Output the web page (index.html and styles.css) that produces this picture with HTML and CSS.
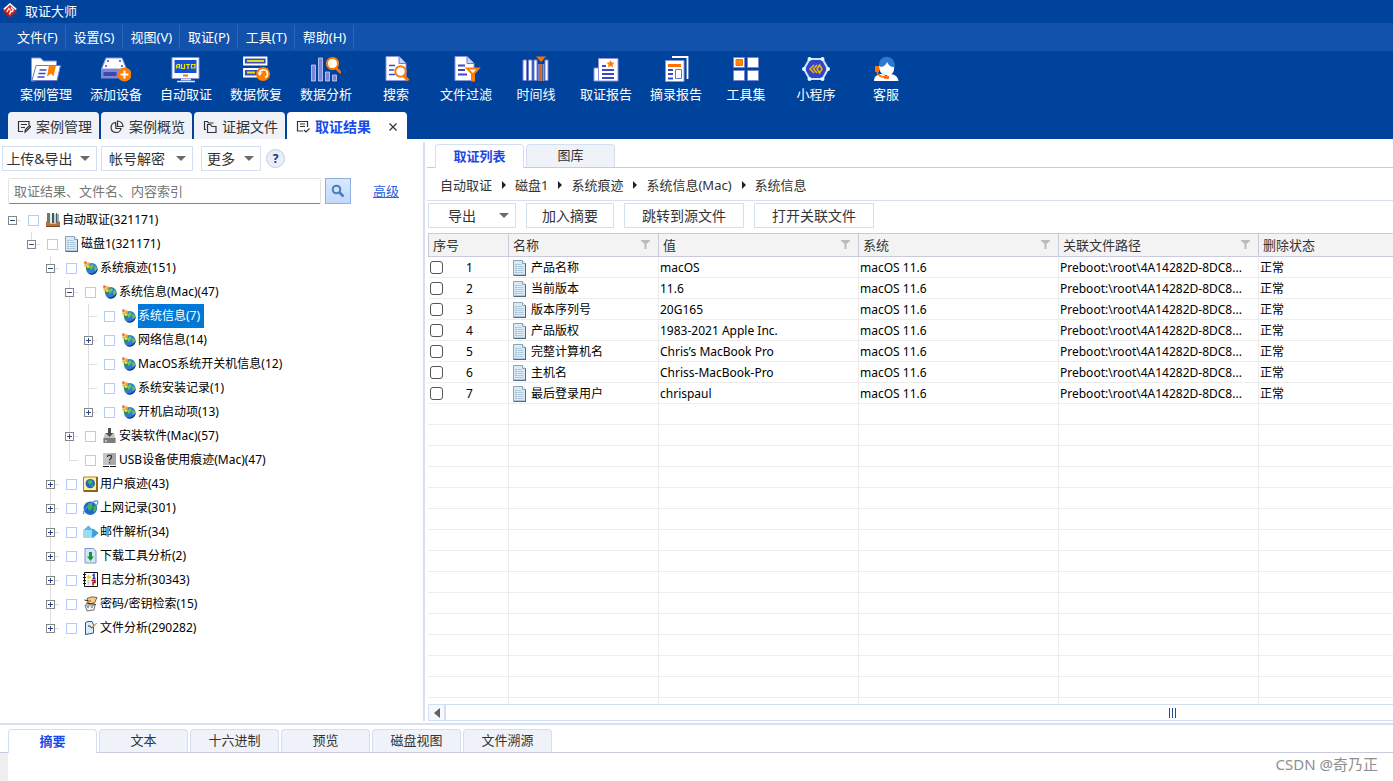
FILE: index.html
```html
<!DOCTYPE html>
<html lang="zh-CN">
<head>
<meta charset="utf-8">
<title>取证大师</title>
<link rel="stylesheet" href="styles.css">
</head>
<body>
<svg class="sprite" aria-hidden="true">
  <symbol id="globe" viewBox="0 0 16 16">
    <circle cx="8.800" cy="8.800" r="5.800" fill="#2f7ad8"/>
    <path d="M14.600 8.500A5.900 5.900 0 0 1 5 13.300c4 1 8-1 9.600-4.800z" fill="#15397c"/>
    <path d="M7 5.500 9 4.200l1.600.6-.2 2.400-1.600 1-.4 1.800-1.400-1zM11.500 6l1.800.6.5 2.200-1.300 2.400-1.300-1.400z" fill="#6cc94a"/>
    <path d="M2.500 7.500 4 10l2 .5 1-2-2-2z" fill="#2f8f3a"/>
    <path d="M1.200 1.500h2.600v2.300H1.200z" fill="#e8661c"/>
    <path d="M4.200 2.500h2.600v2.600H4.200z" fill="#f0a030"/>
    <path d="M1.500 4.300h2.300v2.300H1.500z" fill="#c8b830"/>
    <path d="M4 5.300h2.500v2.500H4z" fill="#f8e040"/>
  </symbol>
  <symbol id="doc" viewBox="0 0 16 16">
    <path d="M.5.500h9l3 3v11.500H.5z" fill="#d9eaf6" stroke="#8ba6bd"/>
    <path d="M9.500.500v3h3" fill="#f4fafe" stroke="#8ba6bd"/>
    <path d="M12.500 3.500v12M.500 15.500h12.500" fill="none" stroke="#4f6a80"/>
    <path d="M2.500 4.500h1M2.500 8.500h1" stroke="#5cb070"/>
    <path d="M2.500 6.500h1M2.500 10.500h1M2.500 12.500h1" stroke="#5a8cd0"/>
    <path d="M4.500 4.500h4M4.500 6.500h6M4.500 8.500h6M4.500 10.500h6M4.500 12.500h6" stroke="#b3cade"/>
  </symbol>
  <symbol id="funnel" viewBox="0 0 9 10"><path d="M0 0h9v1L5.500 4v5h-2V4L0 1z" fill="#bcbcbc"/></symbol>
</svg>

<header class="top">
  <div class="titlebar">
    <svg class="logo" viewBox="0 0 14 16"><path d="M.5 6.500 7 15.500 13.500 6.500V9L7 15.800.5 9z" fill="#b81c16"/><path d="M.5 6.500 7 1l6.500 5.500L7 14z" fill="#d8261e"/><path d="M.8 6.300 7 1l6.200 5.300" fill="none" stroke="#fff" stroke-width="1.600"/><path d="M3.800 9l2-3.500 1.400 1.500M6.500 11.500l1.300-3.500 1.400 1M8 4.500l2.300 2.300-1 2" fill="none" stroke="#fff" stroke-width="1.200"/></svg>
    <span>取证大师</span>
  </div>
  <nav class="menubar">
    <button>文件(F)</button><button>设置(S)</button><button>视图(V)</button><button>取证(P)</button><button>工具(T)</button><button>帮助(H)</button>
  </nav>
  <div class="toolbar">
    <button><svg viewBox="0 0 30 28"><path d="M.5 2h9l3 3h13v6H22L4 25H.5z" fill="#fff" stroke="#8a94dc"/><path d="M5 9.500h24.500L26 24.500H1z" fill="#fff" stroke="#6f78cc"/><path d="M8.500 14h7M7.500 17.500h7M6.500 21h7" stroke="#3b48c8" stroke-width="1.500"/><path d="M18 9.500h7l-2.500 11-2.500-3-4 3z" fill="#ff7d00"/></svg><span>案例管理</span></button>
    <button><svg viewBox="0 0 30 28"><path d="M5 2h16l4.500 11H.500z" fill="#fff" stroke="#8a94dc"/><path d="M0 13h26v9.500H0z" fill="#8088d0"/><path d="M2.500 16h13v4h-13z" fill="#3c47b8"/><path d="M6 5h2M18 5h2M4 10h2M20 10h2" stroke="#3b48c8" stroke-width="1.500"/><circle cx="23.500" cy="18.500" r="7" fill="#ff7d00"/><path d="M19.500 18.500h8M23.500 14.500v8" stroke="#fff" stroke-width="2"/></svg><span>添加设备</span></button>
    <button><svg viewBox="0 0 30 28"><path d="M1 1.500h27v21H1z" fill="#fff" stroke="#8a94dc"/><path d="M3.500 4h22v13h-22z" fill="#1750d8"/><path d="M5.500 12.500v-3l1-1h2v4M5.500 11h3M10.500 8v4.500h3V8M15 8.500h4M17 8.500v4.500M20.500 8.500h3.500v3.500h-3.500z" fill="none" stroke="#e8e800" stroke-width="1.200"/><path d="M12 19.500h5" stroke="#ff7000" stroke-width="2"/><path d="M10 23.500h10M6 25.500h18" stroke="#dfe4ff" stroke-width="1.300"/></svg><span>自动取证</span></button>
    <button><svg viewBox="0 0 30 28"><path d="M3 1.500h22.500v7H3zM3 13h22.500v7.500H3z" fill="#3c47c8" stroke="#fff" stroke-width="1.800"/><path d="M6 5h17M6 16.500h8" stroke="#e9e000" stroke-width="2"/><circle cx="22" cy="18" r="7" fill="#ff7d00"/><path d="M24 21.500a4 4 0 1 0-5.500-3.500" fill="none" stroke="#fff" stroke-width="1.600"/><path d="M16.500 16.500h5l-3 3.500z" fill="#fff"/></svg><span>数据恢复</span></button>
    <button><svg viewBox="0 0 30 28"><g fill="#7c86d8" stroke="#c9d0fa" stroke-width=".8"><path d="M.5 9h4v16h-4zM7.500 2h4v23h-4zM14.500 16h4v9h-4zM21.500 19h4v6h-4z"/></g><path d="m25 12 5 5" stroke="#ff7000" stroke-width="2.600"/><circle cx="21.500" cy="7.500" r="5.600" fill="#fff" stroke="#ff7d00" stroke-width="2"/></svg><span>数据分析</span></button>
    <button><svg viewBox="0 0 30 28"><path d="M5 .5h13l7 7v17H5z" fill="#fff" stroke="#8a94dc"/><path d="M18 .5v7h7" fill="#c9d2fa" stroke="#6f78cc"/><path d="M8 9.500h6M8 14h5M8 18.500h6" stroke="#3b48c8" stroke-width="1.500"/><path d="m22 19 5.500 5.500" stroke="#ff7000" stroke-width="3"/><circle cx="19.500" cy="15.500" r="5.200" fill="#fff" stroke="#ff7d00" stroke-width="2"/></svg><span>搜索</span></button>
    <button><svg viewBox="0 0 30 28"><path d="M4 .5h12l7 7v17H4z" fill="#fff" stroke="#8a94dc"/><path d="M16 .5v7h7" fill="#c9d2fa" stroke="#6f78cc"/><path d="M7 9.500h7M7 14h7M7 18.500h9" stroke="#3b48c8" stroke-width="1.800"/><path d="M16 12.500h11.500l-4.500 5v7h-2v-7z" fill="#fff" stroke="#ff7d00" stroke-width="2"/></svg><span>文件过滤</span></button>
    <button><svg viewBox="0 0 30 28"><g fill="#fff" stroke="#7a82d4"><path d="M2 4h3.500v20.500H2zM7.500 4H11v20.500H7.500zM13 4h3v20.500h-3zM24 4h3v20.500h-3z"/></g><path d="M18 8v17M22.500 8v17" stroke="#8c96e4" stroke-width="1.500"/><path d="M15 .5h10l-5 5.500z" fill="#ff7000"/><path d="M20.200 8v17" stroke="#ff7000" stroke-width="2"/></svg><span>时间线</span></button>
    <button><svg viewBox="0 0 30 28"><path d="M3 12h4.500v13H3zM7.500 2.500H27v22.500H7.500z" fill="#fff" stroke="#8a94dc"/><path d="M11 10h4M11 14h12M11 18h12M11 22h12" stroke="#3b48c8" stroke-width="1.800"/><path d="m19.500 4 1.200 2.500 2.800.2-2 2 .6 2.800-2.600-1.400-2.500 1.400.6-2.800-2-2 2.700-.2z" fill="#ff7d00"/></svg><span>取证报告</span></button>
    <button><svg viewBox="0 0 30 28"><path d="M11 1h15.500v22" fill="none" stroke="#fff" stroke-width="1.800"/><path d="M4.500 4.500H23v21H4.500z" fill="#fff" stroke="#8a94dc"/><path d="M7 9.500h13" stroke="#ff7000" stroke-width="3"/><path d="M7 14h5M7 18h5M7 22.500h5" stroke="#3b48c8" stroke-width="1.800"/><path d="M14.500 13.500h6v9h-6z" fill="#fff" stroke="#6a74d0"/></svg><span>摘录报告</span></button>
    <button><svg viewBox="0 0 30 28"><g fill="#fff" stroke="#7a82d4"><path d="M2.500 1.500h11v10h-11zM16.500 1.500h11v10h-11zM2.500 14.500h11v10h-11zM16.500 14.500h11v10h-11z"/></g><path d="M5 3.500h6.500v6H5z" fill="#ff8a00" stroke="#ff6a00"/></svg><span>工具集</span></button>
    <button><svg viewBox="0 0 30 28"><path d="M8.500 3h13L27 13l-5.500 10h-13L3 13z" fill="#3045cc" stroke="#d4e4ff" stroke-width="2"/><path d="M8.500 3h0M21.500 3h0M27 13h0M21.500 23h0M8.500 23h0M3 13h0" stroke="#e4ffff" stroke-width="4" stroke-linecap="round"/><path d="m13 9-4 4 4 4M16 9l-3.500 4 3.500 4M18.500 9l2.500 4-2.500 4-2.500-4z" fill="none" stroke="#f0b000" stroke-width="1.600"/></svg><span>小程序</span></button>
    <button><svg viewBox="0 0 30 28"><path d="M8 10c-1-12 16-13 16 1l-2 1z" fill="#2f78cc"/><path d="M8 10c4 2 7-1 8-4 2 4 4 5 7 5 1 5-3 8-5 8h-4c-4-1-6-4-6-9zM3 25c0-5 4-7 8-7l4 2 4-2c5 0 8 3 8.500 7z" fill="#fff"/><path d="M4 10h4v6H4z" fill="#ff7000"/><path d="M6 16c1 3 4 5 8 5" fill="none" stroke="#ff7000" stroke-width="1.500"/><path d="M13 21.500h5" stroke="#ff5000" stroke-width="2.400"/></svg><span>客服</span></button>
  </div>
  <nav class="doctabs">
    <button class="doctab"><svg viewBox="0 0 14 14"><path d="M12 5V1.500H1.500v10H6M4 4.500h6M4 7.500h4M8 12l.5-2.500 4-4 1.200 1.200-4 4z" /></svg>案例管理</button>
    <button class="doctab"><svg viewBox="0 0 14 14"><path d="M5.500 2.500A5 5 0 1 0 11 8.500H6zM7.500 1v5.500H13A5.500 5.500 0 0 0 7.500 1z"/></svg>案例概览</button>
    <button class="doctab"><svg viewBox="0 0 14 14"><path d="M3 9.500H1.500v-8h3l1 1.500h5M4.500 4.500h3L9 6.500h4v6H4.500z"/></svg>证据文件</button>
    <button class="doctab active"><svg viewBox="0 0 14 14"><path d="M11.500 7V1.500H1.500v9.500H7M4 4h5M4 6.500h5M8 10l2 2 3.500-3.500"/></svg><b>取证结果</b><svg class="close" viewBox="0 0 10 10"><path d="m1.500 1.500 7 7M8.500 1.500l-7 7"/></svg></button>
  </nav>
</header>

<div class="body">
  <aside class="side">
    <div class="sidetools">
      <button class="btn drop w95"><span>上传&amp;导出</span></button>
      <button class="btn drop w92"><span>帐号解密</span></button>
      <button class="btn drop w60"><span>更多</span></button>
      <button class="help" aria-label="帮助">?</button>
    </div>
    <form class="search">
      <input type="text" aria-label="搜索" placeholder="取证结果、文件名、内容索引">
      <button type="button" aria-label="搜索"><svg viewBox="0 0 14 14"><circle cx="5.500" cy="5.500" r="3.800" fill="none" stroke="#4a7cc0" stroke-width="2"/><path d="m8.500 8.500 4 4" stroke="#4a7cc0" stroke-width="2.600"/></svg></button>
      <a href="#">高级</a>
    </form>
    <ul class="tree">
      <li><div class="node"><button class="exp" aria-label="折叠"></button><input type="checkbox" id="n1"><svg viewBox="0 0 16 16"><path d="M2 1h3v10H2z" fill="#5f7f78"/><path d="M5 2h2v9H5z" fill="#e4eee4"/><path d="M7 1h2v10H7z" fill="#3f5a60"/><path d="M9 2h2v9H9z" fill="#c4d4d8"/><path d="M11 1h1v10h-1z" fill="#4c5960"/><path d="M12 2h2v9h-2z" fill="#8db0b4"/><path d="M1 9.500h3l1 2h6l1-2h3V15H1z" fill="#b5713c"/><path d="M1 14.500h14" stroke="#7a4520"/></svg><label for="n1">自动取证(321171)</label></div>
        <ul>
          <li><div class="node"><button class="exp" aria-label="折叠"></button><input type="checkbox" id="n2"><svg><use href="#doc" x="1"/></svg><label for="n2">磁盘1(321171)</label></div>
            <ul>
              <li><div class="node"><button class="exp" aria-label="折叠"></button><input type="checkbox" id="n3"><svg><use href="#globe"/></svg><label for="n3">系统痕迹(151)</label></div>
                <ul>
                  <li><div class="node"><button class="exp" aria-label="折叠"></button><input type="checkbox" id="n4"><svg><use href="#globe"/></svg><label for="n4">系统信息(Mac)(47)</label></div>
                    <ul>
                      <li><div class="node"><span class="leaf"></span><input type="checkbox" id="n5"><svg><use href="#globe"/></svg><label class="selected" for="n5">系统信息(7)</label></div></li>
                      <li><div class="node"><button class="exp plus" aria-label="展开"></button><input type="checkbox" id="n6"><svg><use href="#globe"/></svg><label for="n6">网络信息(14)</label></div></li>
                      <li><div class="node"><span class="leaf"></span><input type="checkbox" id="n7"><svg><use href="#globe"/></svg><label for="n7">MacOS系统开关机信息(12)</label></div></li>
                      <li><div class="node"><span class="leaf"></span><input type="checkbox" id="n8"><svg><use href="#globe"/></svg><label for="n8">系统安装记录(1)</label></div></li>
                      <li><div class="node"><button class="exp plus" aria-label="展开"></button><input type="checkbox" id="n9"><svg><use href="#globe"/></svg><label for="n9">开机启动项(13)</label></div></li>
                    </ul>
                  </li>
                  <li><div class="node"><button class="exp plus" aria-label="展开"></button><input type="checkbox" id="n10"><svg viewBox="0 0 16 16"><path d="M3 5h9l1.500 5v5h-12v-5z" fill="#c4c4c4"/><path d="M1.500 10h12v5h-12z" fill="#7c7c7c"/><path d="M6 0h3v5h2.500l-4 4-4-4H6z" fill="#505050"/><path d="M3 13h2" stroke="#fff"/></svg><label for="n10">安装软件(Mac)(57)</label></div></li>
                  <li><div class="node"><span class="leaf"></span><input type="checkbox" id="n11"><svg viewBox="0 0 16 16"><path d="M1 1h13v12H1z" fill="#c6c6c6"/><path d="M9 1h5v12H7z" fill="#a8a8a8"/><path d="M1 14.500h13" stroke="#111" stroke-dasharray="6 1"/><path d="M5.500 5c0-2.400 4-2.400 4 0 0 1.500-2 1.500-2 3.500M7.500 10v1.300" fill="none" stroke="#333" stroke-width="1.300"/></svg><label for="n11">USB设备使用痕迹(Mac)(47)</label></div></li>
                </ul>
              </li>
              <li><div class="node"><button class="exp plus" aria-label="展开"></button><input type="checkbox" id="n12"><svg viewBox="0 0 16 16"><path d="M.5 1h14v13.500H.5z" fill="#fdf0b0" stroke="#b5861c"/><path d="M14 1v14H.500" fill="none" stroke="#94640e" stroke-width="2"/><circle cx="7.300" cy="7.600" r="4.700" fill="#1e68c0"/><path d="M4.500 5l4-1 1 3-3 2zM7.500 9.500l3-1-1 3z" fill="#50b848"/></svg><label for="n12">用户痕迹(43)</label></div></li>
              <li><div class="node"><button class="exp plus" aria-label="展开"></button><input type="checkbox" id="n13"><svg viewBox="0 0 16 16"><circle cx="7.300" cy="8.300" r="6.700" fill="#1f6cc4"/><path d="M5.500 3l3.500 1 .5 4L6 11 4.500 7zM10.500 6l3 .5-.5 4-2.500 2z" fill="#4fb03c"/><path d="M1 14C-1 10 10 0 14.500 1c1 1-1 4.500-3 7" fill="none" stroke="#3f95dc" stroke-width="1.200"/></svg><label for="n13">上网记录(301)</label></div></li>
              <li><div class="node"><button class="exp plus" aria-label="展开"></button><input type="checkbox" id="n14"><svg viewBox="0 0 16 16"><path d="M.5 6 5.500 1.500 9 5h2l4.500 4L11 13.500H.500z" fill="#58b7e2"/><path d="M.5 6H9v8H.500z" fill="#9adcf0"/><path d="M9 4.500 15.500 9 9 14z" fill="#3f9edc"/></svg><label for="n14">邮件解析(34)</label></div></li>
              <li><div class="node"><button class="exp plus" aria-label="展开"></button><input type="checkbox" id="n15"><svg viewBox="0 0 16 16"><path d="M2 .5h8.500l2.500 2.500v12H2z" fill="#d4e4fb" stroke="#7c98cc"/><path d="M6 4h3v4.500h2L7.500 13 4 8.500h2z" fill="#169a24"/></svg><label for="n15">下载工具分析(2)</label></div></li>
              <li><div class="node"><button class="exp plus" aria-label="展开"></button><input type="checkbox" id="n16"><svg viewBox="0 0 16 16"><path d="M1.500.500h13v14h-13z" fill="#fffdf0" stroke="#111"/><path d="M0 2.500h3M0 5.500h3M0 8.500h3M0 11.500h3" stroke="#111"/><path d="M5.500 3v4M4 5h4" stroke="#e8cc20" stroke-width="1.500"/><path d="M9.500 3.500 11 2.500v4M9.500 6.500h3" fill="none" stroke="#1c32d0" stroke-width="1.500"/><path d="M8.500 8.500h3.500v2h-2v3" fill="none" stroke="#a41020" stroke-width="1.500"/><path d="M5.500 8v5" stroke="#ccc" stroke-width="2"/></svg><label for="n16">日志分析(30343)</label></div></li>
              <li><div class="node"><button class="exp plus" aria-label="展开"></button><input type="checkbox" id="n17"><svg viewBox="0 0 16 16"><path d="M4 2.500 9 .800l5 .7-2.500 5.500-6 1z" fill="#f4cc8c" stroke="#444" stroke-width=".8"/><path d="M1.500 4l4 1M3 7l10 1.500" stroke="#333"/><path d="M2 9h10l-1 5-7 1z" fill="#eee" stroke="#555" stroke-width=".8"/><path d="M5 4h3v2H5z" fill="#e88030"/><path d="M4 11h2M8 11h2" stroke="#555"/></svg><label for="n17">密码/密钥检索(15)</label></div></li>
              <li><div class="node"><button class="exp plus" aria-label="展开"></button><input type="checkbox" id="n18"><svg viewBox="0 0 16 16"><path d="M2.500 2.500 5 1.500h4l1.500 3V13l-8 1.500z" fill="#d9edfb" stroke="#1d5c9c"/><path d="M5 6h2l1.500 2 5-4.500" fill="none" stroke="#333"/><path d="m10 6.500 3-2.500" stroke="#e0a830" stroke-width="1.500"/></svg><label for="n18">文件分析(290282)</label></div></li>
            </ul>
          </li>
        </ul>
      </li>
    </ul>
  </aside>

  <main class="main">
    <div class="tabs subtabs"><button class="tab active">取证列表</button><button class="tab">图库</button></div>
    <ol class="crumbs"><li>自动取证</li><li>磁盘1</li><li>系统痕迹</li><li>系统信息(Mac)</li><li>系统信息</li></ol>
    <div class="actions">
      <button class="btn drop w88"><span>导出</span></button>
      <button class="btn w88">加入摘要</button>
      <button class="btn w120">跳转到源文件</button>
      <button class="btn w120">打开关联文件</button>
    </div>
    <div class="grid">
      <table>
        <colgroup><col class="c80"><col class="c150"><col class="c200"><col class="c200"><col class="c200"><col></colgroup>
        <thead><tr>
          <th>序号</th>
          <th><div>名称<svg><use href="#funnel"/></svg></div></th>
          <th><div>值<svg><use href="#funnel"/></svg></div></th>
          <th><div>系统<svg><use href="#funnel"/></svg></div></th>
          <th><div>关联文件路径<svg><use href="#funnel"/></svg></div></th>
          <th>删除状态</th>
        </tr></thead>
        <tbody>
          <tr><td><label class="num"><input type="checkbox"><span>1</span></label></td><td><div class="name"><svg><use href="#doc"/></svg>产品名称</div></td><td>macOS</td><td>macOS 11.6</td><td>Preboot:\root\4A14282D-8DC8...</td><td>正常</td></tr>
          <tr><td><label class="num"><input type="checkbox"><span>2</span></label></td><td><div class="name"><svg><use href="#doc"/></svg>当前版本</div></td><td>11.6</td><td>macOS 11.6</td><td>Preboot:\root\4A14282D-8DC8...</td><td>正常</td></tr>
          <tr><td><label class="num"><input type="checkbox"><span>3</span></label></td><td><div class="name"><svg><use href="#doc"/></svg>版本序列号</div></td><td>20G165</td><td>macOS 11.6</td><td>Preboot:\root\4A14282D-8DC8...</td><td>正常</td></tr>
          <tr><td><label class="num"><input type="checkbox"><span>4</span></label></td><td><div class="name"><svg><use href="#doc"/></svg>产品版权</div></td><td>1983-2021 Apple Inc.</td><td>macOS 11.6</td><td>Preboot:\root\4A14282D-8DC8...</td><td>正常</td></tr>
          <tr><td><label class="num"><input type="checkbox"><span>5</span></label></td><td><div class="name"><svg><use href="#doc"/></svg>完整计算机名</div></td><td>Chris’s MacBook Pro</td><td>macOS 11.6</td><td>Preboot:\root\4A14282D-8DC8...</td><td>正常</td></tr>
          <tr><td><label class="num"><input type="checkbox"><span>6</span></label></td><td><div class="name"><svg><use href="#doc"/></svg>主机名</div></td><td>Chriss-MacBook-Pro</td><td>macOS 11.6</td><td>Preboot:\root\4A14282D-8DC8...</td><td>正常</td></tr>
          <tr><td><label class="num"><input type="checkbox"><span>7</span></label></td><td><div class="name"><svg><use href="#doc"/></svg>最后登录用户</div></td><td>chrispaul</td><td>macOS 11.6</td><td>Preboot:\root\4A14282D-8DC8...</td><td>正常</td></tr>
        </tbody>
      </table>
      <div class="filler"><i class="c80"></i><i class="c150"></i><i class="c200"></i><i class="c200"></i><i class="c200"></i></div>
    </div>
    <div class="scroll">
      <button aria-label="向左滚动"><svg viewBox="0 0 6 10"><path d="M6 0v10L0 5z" fill="#606060"/></svg></button>
      <div class="thumb"><span class="grip"></span></div>
    </div>
  </main>
</div>

<footer class="bottom">
  <div class="tabs"><button class="tab active">摘要</button><button class="tab">文本</button><button class="tab">十六进制</button><button class="tab">预览</button><button class="tab">磁盘视图</button><button class="tab">文件溯源</button></div>
  <div class="pane"></div>
  <div class="mark">CSDN @奇乃正</div>
</footer>
</body>
</html>
```
FILE: styles.css
```css
* { box-sizing: border-box; }
body {
  margin: 0;
  height: 100vh;
  display: flex;
  flex-direction: column;
  overflow: hidden;
  background: #fff;
  color: #000;
  font: 12px/20px "Noto Sans", "Noto Sans CJK SC", sans-serif;
}
button, input { font: inherit; color: inherit; margin: 0; padding: 0; border: 0; background: none; }
ul, ol { margin: 0; padding: 0; list-style: none; }
svg { display: block; flex: none; }
.sprite { position: absolute; width: 0; height: 0; }

/* header */
.top { background: #00439c; color: #fff; font-size: 13px; flex: none; }
.titlebar { display: flex; align-items: center; height: 23px; gap: 8px; padding: 0 0 2px 3px; }
.logo { width: 14px; height: 16px; }
.menubar { display: flex; align-items: center; height: 28px; padding-left: 9px; background: #1252ab; }
.menubar button { height: 24px; padding: 0 7px 0 8px; border-right: 1px solid #2a66bb; }
.toolbar { display: flex; height: 61px; padding: 5px 0 0 11px; }
.toolbar button { width: 70px; display: flex; flex-direction: column; align-items: center; }
.toolbar svg { width: 30px; height: 28px; }
.doctabs { display: flex; gap: 2px; padding-left: 8px; }
.doctab {
  display: flex;
  align-items: center;
  gap: 5px;
  height: 27px;
  padding: 2px 7px 0 9px;
  border-radius: 4px 4px 0 0;
  background: #eff2f9;
  color: #333;
  font-size: 14px;
}
.doctab svg { width: 14px; height: 14px; fill: none; stroke: #333; stroke-width: 1.2; }
.doctab.active { background: #fff; color: #1a49e8; padding-right: 9px; }
.doctab .close { width: 10px; height: 10px; margin-left: 12px; }

/* layout */
.body { flex: 1; display: flex; min-height: 0; padding: 3px 0 2px; }
.side { width: 425px; flex: none; border-right: 2px solid #d6e0f2; }
.main { flex: 1; min-width: 0; display: flex; flex-direction: column; padding-left: 2px; }

.btn {
  height: 25px;
  border: 1px solid #d3dff2;
  background: #fff;
  color: #333;
  font-size: 14px;
  white-space: nowrap;
}
.drop { display: flex; align-items: center; padding-right: 6px; }
.drop span { flex: 1; text-align: center; padding-right: 4px; }
.drop::after { content: ""; border: 5px solid transparent; border-top-color: #6a6a6a; border-bottom: 0; }
.w60 { width: 60px; }
.w88 { width: 88px; }
.w92 { width: 92px; }
.w95 { width: 95px; }
.w120 { width: 120px; }

.sidetools { display: flex; align-items: center; gap: 4px; padding: 4px 0 0 2px; }
.sidetools .w60 { margin-left: 4px; }
.help {
  width: 19px;
  height: 19px;
  margin-left: 1px;
  border: 1px solid #c3cfe2;
  border-radius: 50%;
  background: #e8edf6;
  color: #0c3a8c;
  font-weight: bold;
  line-height: 17px;
}
.search { display: flex; align-items: center; gap: 4px; padding: 7px 0 0 8px; }
.search input {
  width: 313px;
  height: 26px;
  padding: 0 5px;
  border: 1px solid #e4e4e4;
  border-bottom-color: #868686;
  border-radius: 2px;
  font-size: 13px;
}
.search input::placeholder { color: #767676; opacity: 1; }
.search button {
  width: 26px;
  height: 26px;
  display: grid;
  place-items: center;
  border: 1px solid #8fb0dc;
  background: linear-gradient(#d8e8fd, #c2d9fb);
}
.search svg { width: 14px; height: 14px; }
.search a { margin-left: 18px; color: #2a5fd8; font-size: 13px; }

/* tree */
.tree { padding: 4px 0 0 8px; }
.tree ul { margin-left: 19px; }
.tree ul > li { background: linear-gradient(#dedede, #dedede) 4px 0 / 1px 100% no-repeat; }
.tree ul > li:last-child { background-size: 1px 12px; }
.node { display: flex; align-items: center; height: 24px; }
.exp, .leaf { width: 9px; height: 9px; flex: none; }
.exp {
  border: 1px solid #868686;
  background: linear-gradient(#2b4a92, #2b4a92) center / 5px 1px no-repeat #fff;
}
.exp.plus {
  background:
    linear-gradient(#2b4a92, #2b4a92) center / 5px 1px no-repeat,
    linear-gradient(#2b4a92, #2b4a92) center / 1px 5px no-repeat #fff;
}
.leaf { background: linear-gradient(#dedede, #dedede) 4px 4px / 5px 1px no-repeat; }
.node::before { content: ""; order: 1; width: 4px; height: 1px; background: #dedede; }
.node input, .node svg, .node label { order: 2; }
.node input {
  appearance: none;
  width: 11px;
  height: 11px;
  margin: 0 6px 0 7px;
  border: 1px solid #b5cbfa;
  background: #fff;
}
.node svg { width: 16px; height: 16px; margin-right: 1px; }
.node label { line-height: 24px; padding-right: 4px; white-space: nowrap; }
.node .selected { background: #0078d7; color: #fff; }

/* tabs */
.tabs { display: flex; gap: 2px; padding-left: 8px; height: 24px; border-bottom: 1px solid #cacade; }
.tab {
  width: 89px;
  height: 23px;
  padding-bottom: 2px;
  border: 1px solid #d3dff2;
  border-bottom: 0;
  border-radius: 4px 4px 0 0;
  background: #eff2f9;
  color: #333;
  font-size: 13px;
}
.tab.active { height: 24px; background: #fff; color: #1a49e8; font-weight: bold; }
.subtabs { margin-top: 2px; }

.crumbs { display: flex; align-items: center; height: 33px; padding: 2px 0 0 13px; border-bottom: 1px solid #d6e0f2; color: #333; font-size: 13px; }
.crumbs li { display: flex; align-items: center; }
.crumbs li + li::before { content: ""; margin: 0 9px 0 10px; border: 4px solid transparent; border-left-color: #222; border-right: 0; }
.actions { display: flex; gap: 10px; padding: 2px 0 5px 1px; }

/* table */
.grid { flex: 1; min-height: 0; margin-left: 1px; overflow: hidden; display: flex; flex-direction: column; }
table { width: 100%; table-layout: fixed; border-collapse: separate; border-spacing: 0; }
.c80 { width: 80px; }
.c150 { width: 150px; }
.c200 { width: 200px; }
th {
  height: 24px;
  padding: 0 0 0 4px;
  border: 1px solid #cacade;
  border-right: 0;
  background: #f3f3f3;
  color: #333;
  font-size: 13px;
  font-weight: normal;
  text-align: left;
}
th div { display: flex; align-items: center; justify-content: space-between; padding-right: 8px; }
th svg { width: 9px; height: 10px; }
td {
  height: 21px;
  padding: 2px 0 0 1px;
  border-left: 1px solid #ececec;
  border-bottom: 1px solid #ececec;
  line-height: 18px;
  white-space: nowrap;
}
td:first-child { border-left-color: transparent; }
.num { display: flex; align-items: center; }
.num input { appearance: none; width: 13px; height: 13px; margin-bottom: 2px; border: 1px solid #555; border-radius: 3px; }
.num span { flex: 1; text-align: center; padding-right: 12px; }
.name { display: flex; align-items: center; gap: 2px; padding-left: 3px; }
.name svg { width: 16px; height: 16px; }
.filler { flex: 1; display: flex; background: repeating-linear-gradient(transparent 0 20px, #ececec 20px 21px); }
.filler i { border-right: 1px solid #ececec; margin-right: -1px; padding-right: 1px; box-sizing: content-box; flex: none; }
.filler .c80 { width: 79px; }
.filler .c150 { width: 149px; }
.filler .c200 { width: 199px; }

.scroll { display: flex; height: 17px; flex: none; margin-left: 1px; border: 1px solid #d3dff2; border-right: 0; }
.scroll button { width: 17px; display: grid; place-items: center; background: #f6f8fc; border-right: 2px solid #d3dff2; }
.scroll button svg { width: 6px; height: 10px; }
.thumb { flex: 1; display: flex; align-items: center; padding-left: 75%; }
.grip { width: 7px; height: 10px; background: repeating-linear-gradient(90deg, #1c4f9c 0 1px, transparent 1px 3px); }

/* bottom */
.bottom { flex: none; position: relative; border-top: 2px solid #d6e0f2; padding-top: 4px; }
.pane { height: 28px; border-left: 8px solid #efefef; }
.mark { position: absolute; right: 15px; bottom: 7px; color: #8e8e8e; font-size: 15px; }
```
